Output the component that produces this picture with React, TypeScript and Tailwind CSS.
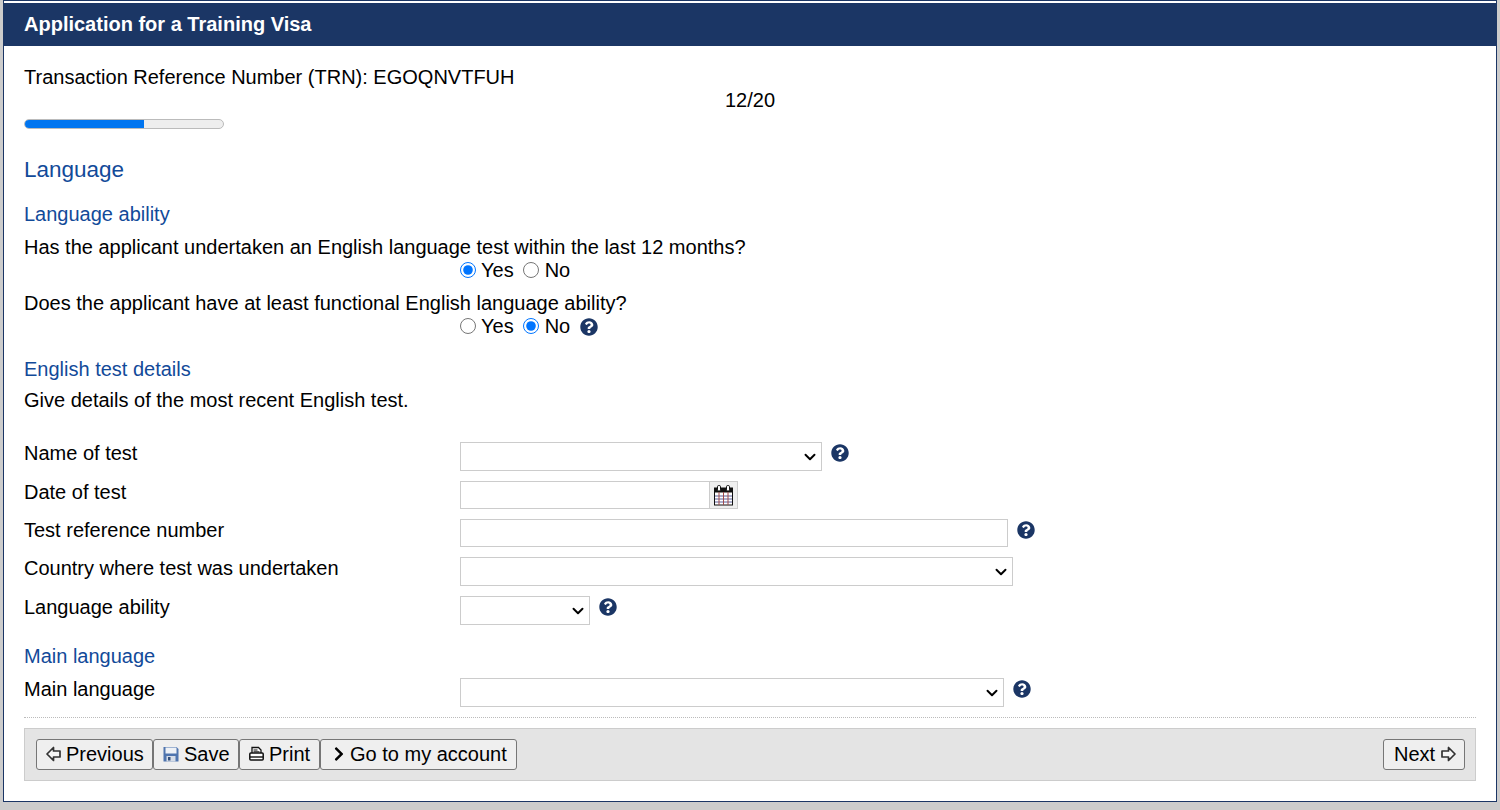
import { FaQuestionCircle, FaChevronRight } from 'react-icons/fa';
import { ChevronDown } from 'lucide-react';

function Help({ className = '' }: { className?: string }) {
  return <FaQuestionCircle className={`text-[#1b3665] text-[18px] ${className}`} />;
}

function ArrowIcon({ flip = false }: { flip?: boolean }) {
  return (
    <svg width="15" height="16" viewBox="0 0 15 16" className={flip ? 'scale-x-[-1]' : ''}>
      <path d="M1 8 L7.5 1.5 V5 H14 V11 H7.5 V14.5 Z" fill="#f6f6f6" stroke="#333" strokeWidth="1.7" strokeLinejoin="round" />
    </svg>
  );
}

function SaveIcon() {
  return (
    <svg width="16" height="16" viewBox="0 0 16 16">
      <path d="M0.5 1 H13.5 L15.5 3 V15.5 H0.5 Z" fill="#4f74ae" />
      <rect x="2.5" y="1.5" width="11" height="6" fill="#eef1f6" />
      <rect x="3.5" y="10" width="9" height="5.5" fill="#d6dde8" />
      <rect x="5" y="11" width="2.5" height="3.5" fill="#34507c" />
    </svg>
  );
}

function PrintIcon() {
  return (
    <svg width="15" height="16" viewBox="0 0 15 16">
      <path d="M3 7 V1.5 H9.5 L12 4 V7" fill="#fff" stroke="#111" strokeWidth="1.3" />
      <rect x="0.8" y="7" width="13.4" height="7" rx="1" fill="#fff" stroke="#111" strokeWidth="1.5" />
      <path d="M4.5 4 H8.5 M4.5 5.8 H10.5" stroke="#111" strokeWidth="1" />
      <path d="M1 11 H14" stroke="#111" strokeWidth="1.4" />
    </svg>
  );
}

function CalendarIcon() {
  return (
    <svg width="19" height="21" viewBox="0 0 19 21">
      <rect x="0.5" y="3" width="18" height="17" fill="#fff" stroke="#111" />
      <rect x="0.5" y="3" width="18" height="4.5" fill="#111" />
      <rect x="3.5" y="0.5" width="3" height="5.5" rx="1.2" fill="#fff" stroke="#111" />
      <rect x="12.5" y="0.5" width="3" height="5.5" rx="1.2" fill="#fff" stroke="#111" />
      <path d="M1 11 H18 M1 14 H18 M1 17 H18" stroke="#5a5f9a" />
      <path d="M5 7 V20 M9.5 7 V20 M14 7 V20" stroke="#a04a4a" />
    </svg>
  );
}

function Row({ label, children, className = '' }: { label: string; children: React.ReactNode; className?: string }) {
  return (
    <div className={`flex items-start ${className}`}>
      <label className="w-[436px] shrink-0 leading-[23px]">{label}</label>
      {children}
    </div>
  );
}

function Radio({ checked, text }: { checked: boolean; text: string }) {
  return (
    <label className="inline-flex items-center">
      <input type="radio" readOnly checked={checked} className={`w-4 h-4 accent-[#0075ff] mb-[2px] ${text === 'No' ? 'mr-[6px]' : 'mr-[5px]'}`} />
      {text}
    </label>
  );
}

function Select({ className = '' }: { className?: string }) {
  return (
    <div className={`relative h-[29px] ${className}`}>
      <select className="appearance-none w-full h-full bg-white border border-[#ccc] text-[20px]" />
      <ChevronDown size={18} strokeWidth={2.6} className="absolute right-[3px] top-[6px] text-black pointer-events-none" />
    </div>
  );
}

const inputCls = 'h-[28px] bg-white border border-[#ccc] px-1';
const btnCls = 'h-[31px] flex items-center bg-[#efefef] border border-[#767676] rounded-[3px] text-[20px] pb-[1px]';

export default function App() {
  return (
    <div className="h-[810px] bg-[#cccccc] pl-[3px] pr-[3px] overflow-hidden font-['Liberation_Sans',Arial,sans-serif] text-[20px] text-black">
      <div className="h-[802px] bg-white border-x border-b border-[#1b3665]">
        <div className="h-[3px] bg-white border-t border-[#1b3665]" />
        <div className="h-[43px] bg-[#1b3665] text-white font-bold pl-[20px] pb-[2px] flex items-center">Application for a Training Visa</div>

        <div className="px-[20px]">
          <div className="pt-[20px] leading-[23px]">Transaction Reference Number (TRN): EGOQNVTFUH</div>
          <div className="text-center leading-[23px]">12/20</div>
          <div className="mt-[7px] w-[200px] h-[10px] rounded-full border border-[#bbb] bg-[#eee] overflow-hidden">
            <div className="w-[119px] h-full bg-[#0075f0]" />
          </div>

          <h1 className="mt-[27px] text-[22.5px] leading-[28px] text-[#124a99]">Language</h1>
          <h2 className="mt-[19px] leading-[23px] text-[#124a99]">Language ability</h2>

          <p className="mt-[10px] leading-[23px]">Has the applicant undertaken an English language test within the last 12 months?</p>
          <div className="pl-[436px] flex gap-[9px] leading-[23px]">
            <Radio checked text="Yes" />
            <Radio checked={false} text="No" />
          </div>
          <p className="mt-[10px] leading-[23px]">Does the applicant have at least functional English language ability?</p>
          <div className="pl-[436px] flex items-center gap-[10px] leading-[23px]">
            <div className="flex gap-[9px]">
              <Radio checked={false} text="Yes" />
              <Radio checked text="No" />
            </div>
            <Help />
          </div>

          <h2 className="mt-[20px] leading-[23px] text-[#124a99]">English test details</h2>
          <p className="mt-[8px] leading-[23px]">Give details of the most recent English test.</p>

          <Row label="Name of test" className="mt-[30px]">
            <Select className="w-[362px]" />
            <Help className="ml-[9px] mt-[2px]" />
          </Row>
          <Row label="Date of test" className="mt-[10px]">
            <input className={`${inputCls} w-[250px]`} />
            <button className="w-[28px] h-[28px] bg-[#efefef] border border-[#ccc] border-l-0 flex items-center justify-center"><CalendarIcon /></button>
          </Row>
          <Row label="Test reference number" className="mt-[10px]">
            <input className={`${inputCls} w-[548px]`} />
            <Help className="ml-[9px] mt-[2px]" />
          </Row>
          <Row label="Country where test was undertaken" className="mt-[10px]">
            <Select className="w-[553px]" />
          </Row>
          <Row label="Language ability" className="mt-[10px]">
            <Select className="w-[130px]" />
            <Help className="ml-[9px] mt-[2px]" />
          </Row>

          <h2 className="mt-[20px] leading-[23px] text-[#124a99]">Main language</h2>
          <Row label="Main language" className="mt-[10px]">
            <Select className="w-[544px]" />
            <Help className="ml-[9px] mt-[2px]" />
          </Row>

          <div className="mt-[10px] border-t border-dotted border-[#bbb]" />

          <div className="mt-[10px] h-[53px] bg-[#e4e4e4] border border-[#ccc] pl-[11px] pr-[10px] flex items-center justify-between">
            <div className="flex">
              <button className={`${btnCls} w-[117px] pl-[9px] gap-[5px]`}><ArrowIcon />Previous</button>
              <button className={`${btnCls} w-[86px] pl-[9px] gap-[5px]`}><SaveIcon />Save</button>
              <button className={`${btnCls} w-[81px] pl-[9px] gap-[5px]`}><PrintIcon />Print</button>
              <button className={`${btnCls} w-[197px] pl-[10px] gap-[3px]`}><FaChevronRight className="text-[16px]" />Go to my account</button>
            </div>
            <button className={`${btnCls} w-[82px] pl-[10px] gap-[6px]`}>Next<ArrowIcon flip /></button>
          </div>
        </div>
      </div>
    </div>
  );
}
